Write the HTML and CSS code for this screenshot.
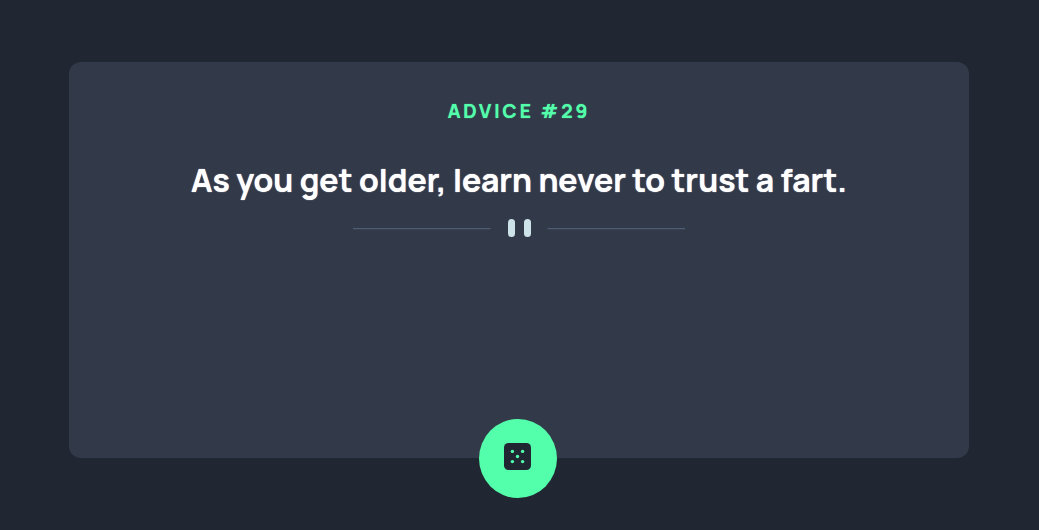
FILE: index.html
```
<!DOCTYPE html>
<html lang="en">
<head>
<meta charset="utf-8">
<meta name="viewport" content="width=device-width, initial-scale=1">
<title>Advice generator</title>
<link rel="stylesheet" href="styles.css">
</head>
<body>
<main class="card">
  <h1 class="label">ADVICE #29</h1>
  <p class="quote">As you get older, learn never to trust a fart.</p>
  <svg class="divider" width="332" height="18" viewBox="0 0 332 18" aria-hidden="true">
    <path fill="#4f5d74" d="M0 9h137.500v1.200H0zM194.500 9h137.500v1.200H194.500z"/>
    <g fill="#cee3e9"><rect x="155" y="0" width="7" height="18" rx="3.500"/><rect x="171" y="0" width="7" height="18" rx="3.500"/></g>
  </svg>
  <button class="dice" type="button" aria-label="New advice">
    <svg width="27" height="27" viewBox="0 0 27 27" aria-hidden="true">
      <rect width="27" height="27" rx="4.500" fill="#202733"/>
      <g fill="#53ffaa"><circle cx="8.400" cy="8.400" r="1.700"/><circle cx="18.600" cy="8.400" r="1.700"/><circle cx="13.500" cy="13.500" r="1.700"/><circle cx="8.400" cy="18.600" r="1.700"/><circle cx="18.600" cy="18.600" r="1.700"/></g>
    </svg>
  </button>
</main>
</body>
</html>
```
FILE: styles.css
```
* { box-sizing: border-box; }
body {
  margin: 0;
  min-height: 100vh;
  padding: 62px 70px 72px 69px;
  display: flex;
  background: #202632;
  font-family: Manrope, Inter, "Open Sans", sans-serif;
}
.card {
  flex: 1;
  position: relative;
  display: flex;
  flex-direction: column;
  align-items: center;
  padding: 36px 24px 64px;
  border-radius: 12px;
  background: #323a49;
  text-align: center;
}
.label {
  margin: 0;
  color: #53ffaa;
  font-size: 19px;
  line-height: 26px;
  font-weight: 700;
  letter-spacing: 3px;
  text-shadow: 0 0 1px currentColor;
}
.quote {
  margin: 34px 0 17px;
  color: #fff;
  font-size: 32px;
  line-height: 44px;
  font-weight: 700;
  text-shadow: 0 0 1px currentColor;
}
.divider { flex: none; max-width: 100%; }
.dice {
  position: absolute;
  bottom: -40px;
  left: calc(50% - 40px);
  display: grid;
  place-items: center;
  width: 78px;
  height: 79px;
  padding: 0 2px 4px 0;
  border: 0;
  border-radius: 50%;
  background: #53ffaa;
  cursor: pointer;
}
```
